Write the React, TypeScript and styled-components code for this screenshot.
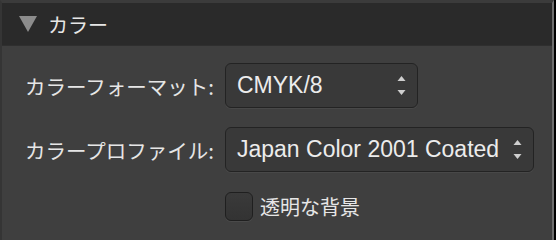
import React from 'react';
import styled, { createGlobalStyle } from 'styled-components';

const GlobalStyle = createGlobalStyle`
  html, body {
    margin: 0;
    padding: 0;
    background: #000;
  }
`;

const Frame = styled.div`
  width: 556px;
  height: 240px;
  display: flex;
  padding-right: 2px;
  box-sizing: border-box;
  background: #000;
  overflow: hidden;
`;

const Panel = styled.div`
  flex: 1;
  display: flex;
  flex-direction: column;
  background: #3f3f3f;
  border-top: 3px solid #3b3b3b;
  border-left: 2px solid #353535;
  border-right: 2px solid #6d6d6d;
  font-family: "Noto Sans CJK JP", "Liberation Sans", sans-serif;
  color: #e6e6e6;
`;

const Header = styled.div`
  height: 42px;
  display: flex;
  align-items: center;
  gap: 11px;
  padding-left: 17px;
  background: #2a2a2a;
  border-bottom: 1px solid #2f2f2f;
  font-size: 20px;
`;

const Body = styled.div`
  display: grid;
  grid-template-columns: auto auto;
  justify-content: start;
  align-items: center;
  column-gap: 11px;
  row-gap: 19px;
  padding: 17px 0 0 23px;
`;

const Label = styled.div`
  font-size: 20.5px;
  text-align: right;
  white-space: nowrap;
`;

const Select = styled.div<{ $width: number }>`
  width: ${(p) => p.$width}px;
  height: 45px;
  box-sizing: border-box;
  display: flex;
  align-items: center;
  justify-content: space-between;
  padding: 0 11px 0 11px;
  background: #393939;
  border: 1px solid #232323;
  border-radius: 6px;
  box-shadow: 0 1px 0 #484848;
  font-family: "Liberation Sans", "Noto Sans CJK JP", sans-serif;
  font-size: 23px;
  color: #ececec;
`;

const CheckRow = styled.label`
  grid-column: 2;
  display: flex;
  align-items: center;
  gap: 7px;
  margin-top: 1px;
  font-size: 20px;
`;

const Box = styled.span`
  width: 28px;
  height: 29px;
  box-sizing: border-box;
  border-radius: 6px;
  background: linear-gradient(#3a3a3a, #333333);
  border: 1px solid #1f1f1f;
  box-shadow: 0 1px 0 #4a4a4a;
`;

const Disclosure = () => (
  <svg width="18" height="16" viewBox="0 0 18 16">
    <polygon points="0,0 18,0 9,16" fill="#8c8c8c" />
  </svg>
);

const Stepper = () => (
  <svg width="9" height="20" viewBox="0 0 9 20">
    <polygon points="4.5,0 8.5,5 0.5,5" fill="#cfcfcf" />
    <polygon points="0.5,14 8.5,14 4.5,19" fill="#cfcfcf" />
  </svg>
);

export default function App() {
  return (
    <>
      <GlobalStyle />
      <Frame>
        <Panel>
          <Header>
            <Disclosure />
            <span>カラー</span>
          </Header>
          <Body>
            <Label>カラーフォーマット:</Label>
            <Select $width={193}>
              <span>CMYK/8</span>
              <Stepper />
            </Select>
            <Label>カラープロファイル:</Label>
            <Select $width={309}>
              <span>Japan Color 2001 Coated</span>
              <Stepper />
            </Select>
            <CheckRow>
              <Box />
              <span>透明な背景</span>
            </CheckRow>
          </Body>
        </Panel>
      </Frame>
    </>
  );
}
